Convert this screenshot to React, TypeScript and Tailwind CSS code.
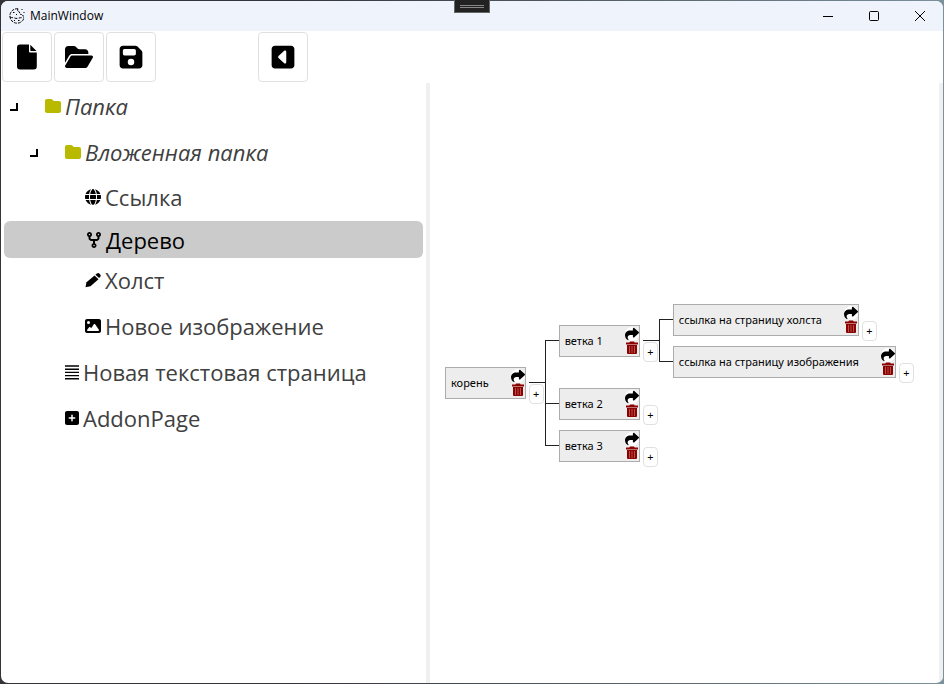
import { ReactNode } from "react";
import { clsx } from "clsx";
import {
  FaCodeFork,
  FaFloppyDisk,
  FaFolder,
  FaFolderOpen,
  FaGlobe,
  FaImage,
  FaShare,
  FaSquareCaretLeft,
  FaSquarePlus,
} from "react-icons/fa6";

function CookieIcon() {
  return (
    <svg viewBox="0 0 16 16" className="size-4" fill="none" stroke="#000" strokeWidth="1" aria-hidden="true">
      <path d="M9 .8A7.200 7.200 0 1 0 15 10" strokeDasharray="3 1" />
      <path d="M9 .8c-1 1.700 0 3 1.500 3.200-.2 1.600.8 2.800 2.300 2.500.3 1.200 1.200 1.800 2.700 1.500" strokeDasharray="2 1" />
      <path d="M1 9c1.500 1 3 .3 4.500 1s3 .5 4.500 0 3-.3 5 0" strokeDasharray="3 1.500" />
      <path d="M12.500 1.500h1M14.500 4.500h1M4 4.500h1.500M7 6.500h1M5 12.500h1M9 12.500h1.500" />
    </svg>
  );
}

function FileIcon() {
  return (
    <svg viewBox="0 0 20 26" className="h-[26px] w-5" fill="currentColor" aria-hidden="true">
      <path d="M3 .5h9V7.500q0 1 1 1h6.800V22.500q0 3-3 3H3q-3 0-3-3V3.500q0-3 3-3z" />
      <path d="M13.300 .8l6.200 6.200h-5.500q-.7 0-.7-.7z" />
    </svg>
  );
}

function LinesIcon() {
  return (
    <svg viewBox="0 0 14 16" className="h-4 w-[14px]" stroke="currentColor" strokeWidth="1.400" aria-hidden="true">
      <path d="M0 2h14M0 5.200h14M0 8.400h14M0 11.600h14M0 14.800h14" />
    </svg>
  );
}

function PencilIcon() {
  return (
    <svg viewBox="0 0 16 16" className="size-4" fill="currentColor" aria-hidden="true">
      <path d="M.5 15.300l1-5L9.500 3.500l4 3.800-8 7z" />
      <path d="M10.400 2.800l1.500-1.300q1.400-1 2.600.2l.7.800q1.100 1.300-.1 2.400l-1 1z" />
    </svg>
  );
}

function TrashIcon() {
  return (
    <svg viewBox="0 0 12 14" className="h-[14px] w-3" aria-hidden="true">
      <path d="M4 .5h4l.7 1H12v2H0v-2h3.300z" fill="currentColor" />
      <path d="M1 4h10v8q0 1-1 1H2q-1 0-1-1z" fill="currentColor" />
      <path d="M3.500 5v7M6 5v7M8.500 5v7" stroke="#d08a80" strokeWidth=".6" />
    </svg>
  );
}

type Page = {
  title: string;
  icon: ReactNode;
  folder?: boolean;
  selected?: boolean;
  indent: string;
};

const pages: Page[] = [
  { title: "Папка", icon: <FaFolder className="size-4 text-[#b9b900]" />, folder: true, indent: "pl-2" },
  { title: "Вложенная папка", icon: <FaFolder className="size-4 text-[#b9b900]" />, folder: true, indent: "pl-7" },
  { title: "Ссылка", icon: <FaGlobe className="size-4" />, indent: "pl-[84px]" },
  { title: "Дерево", icon: <FaCodeFork className="size-4" />, selected: true, indent: "pl-[82px]" },
  { title: "Холст", icon: <PencilIcon />, indent: "pl-[84px]" },
  { title: "Новое изображение", icon: <FaImage className="size-4" />, indent: "pl-[84px]" },
  { title: "Новая текстовая страница", icon: <LinesIcon />, indent: "pl-16" },
  { title: "AddonPage", icon: <FaSquarePlus className="h-4 w-[14px]" />, indent: "pl-16" },
];

type TreeNode = { label: string; children?: TreeNode[] };

const tree: TreeNode = {
  label: "корень",
  children: [
    {
      label: "ветка 1",
      children: [
        { label: "ссылка на страницу холста" },
        { label: "ссылка на страницу изображения" },
      ],
    },
    { label: "ветка 2" },
    { label: "ветка 3" },
  ],
};

function TitleBar() {
  return (
    <header className="flex h-[30px] shrink-0 items-center bg-[#eff3fb] pl-2">
      <CookieIcon />
      <h1 className="ml-[5px] flex-1 font-['Open_Sans','Segoe_UI',sans-serif] text-[12px] leading-4">MainWindow</h1>
      <button aria-label="Свернуть" className="flex h-full w-[46px] items-center justify-center">
        <svg viewBox="0 0 10 10" className="size-[10px]" stroke="#000" aria-hidden="true">
          <path d="M0 5.500h10" />
        </svg>
      </button>
      <button aria-label="Развернуть" className="flex h-full w-[46px] items-center justify-center">
        <svg viewBox="0 0 10 10" className="size-[10px]" fill="none" stroke="#000" aria-hidden="true">
          <rect x=".5" y=".5" width="9" height="9" rx="1" />
        </svg>
      </button>
      <button aria-label="Закрыть" className="flex h-full w-[46px] items-center justify-center">
        <svg viewBox="0 0 10 10" className="size-[10px]" stroke="#000" aria-hidden="true">
          <path d="M0 0l10 10M10 0L0 10" />
        </svg>
      </button>
    </header>
  );
}

function ToolButton({ label, children }: { label: string; children: ReactNode }) {
  return (
    <button
      aria-label={label}
      className="flex size-[50px] items-center justify-center rounded-[4px] border border-[#e0e0e0] bg-white"
    >
      {children}
    </button>
  );
}

function Toolbar() {
  return (
    <div className="flex h-[52px] shrink-0 items-center pl-px">
      <div className="flex w-[256px] gap-[2px]">
        <ToolButton label="Создать">
          <FileIcon />
        </ToolButton>
        <ToolButton label="Открыть">
          <FaFolderOpen className="size-[28px]" />
        </ToolButton>
        <ToolButton label="Сохранить">
          <FaFloppyDisk className="size-[26px]" />
        </ToolButton>
      </div>
      <ToolButton label="Скрыть панель">
        <FaSquareCaretLeft className="size-[26px]" />
      </ToolButton>
    </div>
  );
}

function PageRow({ page }: { page: Page }) {
  return (
    <li
      className={clsx(
        "flex items-center",
        page.selected && "mx-[3px] h-[37px] rounded-[6px] bg-[#cbcbcb] text-black",
        !page.selected && "h-[46px] text-[#404040]",
        !page.selected && !page.folder && "pb-[2px]",
        page.indent,
      )}
    >
      {page.folder && (
        <button aria-label="Свернуть папку" className="mr-[26px] flex size-[10px] items-center justify-center">
          <svg viewBox="0 0 10 10" className="size-[10px]" fill="none" stroke="#000" strokeWidth="2" aria-hidden="true">
            <path d="M1 9h7V2" />
          </svg>
        </button>
      )}
      <button className="flex items-center gap-1">
        <span className="text-black">{page.icon}</span>
        <span className={clsx("font-['Open_Sans','Segoe_UI',sans-serif] text-[22px] leading-8", page.folder && "italic")}>
          {page.title}
        </span>
      </button>
    </li>
  );
}

function NodeBox({ node }: { node: TreeNode }) {
  return (
    <div className="relative flex shrink-0">
      <div className="flex h-8 items-center border border-[#acacac] bg-[#ededed] pl-[5px]">
        <span className="mr-[22px] whitespace-nowrap text-[11px] leading-4">{node.label}</span>
        <div className="flex w-[14px] flex-col items-center">
          <button aria-label="Перейти" className="rounded-full bg-white">
            <FaShare className="size-[14px]" />
          </button>
          <button aria-label="Удалить" className="text-[#8b0000]">
            <TrashIcon />
          </button>
        </div>
      </div>
      <button
        aria-label="Добавить ветку"
        className="absolute top-[17px] left-full ml-[3px] flex h-5 w-[15px] items-center justify-center rounded-[4px] border border-[#e0e0e0] bg-white text-[11px] leading-4"
      >
        +
      </button>
    </div>
  );
}

function Branch({ node }: { node: TreeNode }) {
  return (
    <div className="flex items-center">
      <NodeBox node={node} />
      {node.children && (
        <>
          <div className="-mt-px ml-[3px] h-px w-4 shrink-0 bg-[#222]" />
          <ul className="-my-[5px]">
            {node.children.map((child, index) => (
              <li key={child.label} className="relative flex items-center py-[5px]">
                <span
                  className={clsx(
                    "absolute left-0 w-px bg-[#222]",
                    index === 0 ? "top-1/2 -mt-px" : "top-0",
                    index === node.children!.length - 1 ? "bottom-1/2" : "bottom-0",
                  )}
                />
                <div className="-mt-px h-px w-[14px] shrink-0 bg-[#222]" />
                <Branch node={child} />
              </li>
            ))}
          </ul>
        </>
      )}
    </div>
  );
}

export default function App() {
  return (
    <div className="relative h-screen bg-linear-to-r from-[#33343a] from-30% to-[#7b919c] p-px font-['Noto_Sans','Segoe_UI',sans-serif] text-black">
      <div className="flex h-full flex-col overflow-hidden rounded-[7px] bg-white">
        <TitleBar />
        <Toolbar />
        <main className="flex min-h-0 flex-1">
          <nav aria-label="Страницы" className="w-[425px] shrink-0">
            <ul>
              {pages.map((page) => (
                <PageRow key={page.title} page={page} />
              ))}
            </ul>
          </nav>
          <div className="w-1 shrink-0 bg-[#f0f0f0]" />
          <section aria-label="Дерево" className="flex min-w-0 flex-1 items-center overflow-hidden pl-[15px]">
            <Branch node={tree} />
          </section>
          <div className="w-1 shrink-0 bg-[#f0f0f0]" />
        </main>
      </div>
      <div className="absolute top-0 left-1/2 flex h-[13px] w-9 -translate-x-1/2 flex-col items-center justify-center gap-px border border-t-0 border-[#666] bg-[#222]">
        <span className="h-px w-6 bg-[#888]" />
        <span className="h-px w-6 bg-[#888]" />
      </div>
    </div>
  );
}
